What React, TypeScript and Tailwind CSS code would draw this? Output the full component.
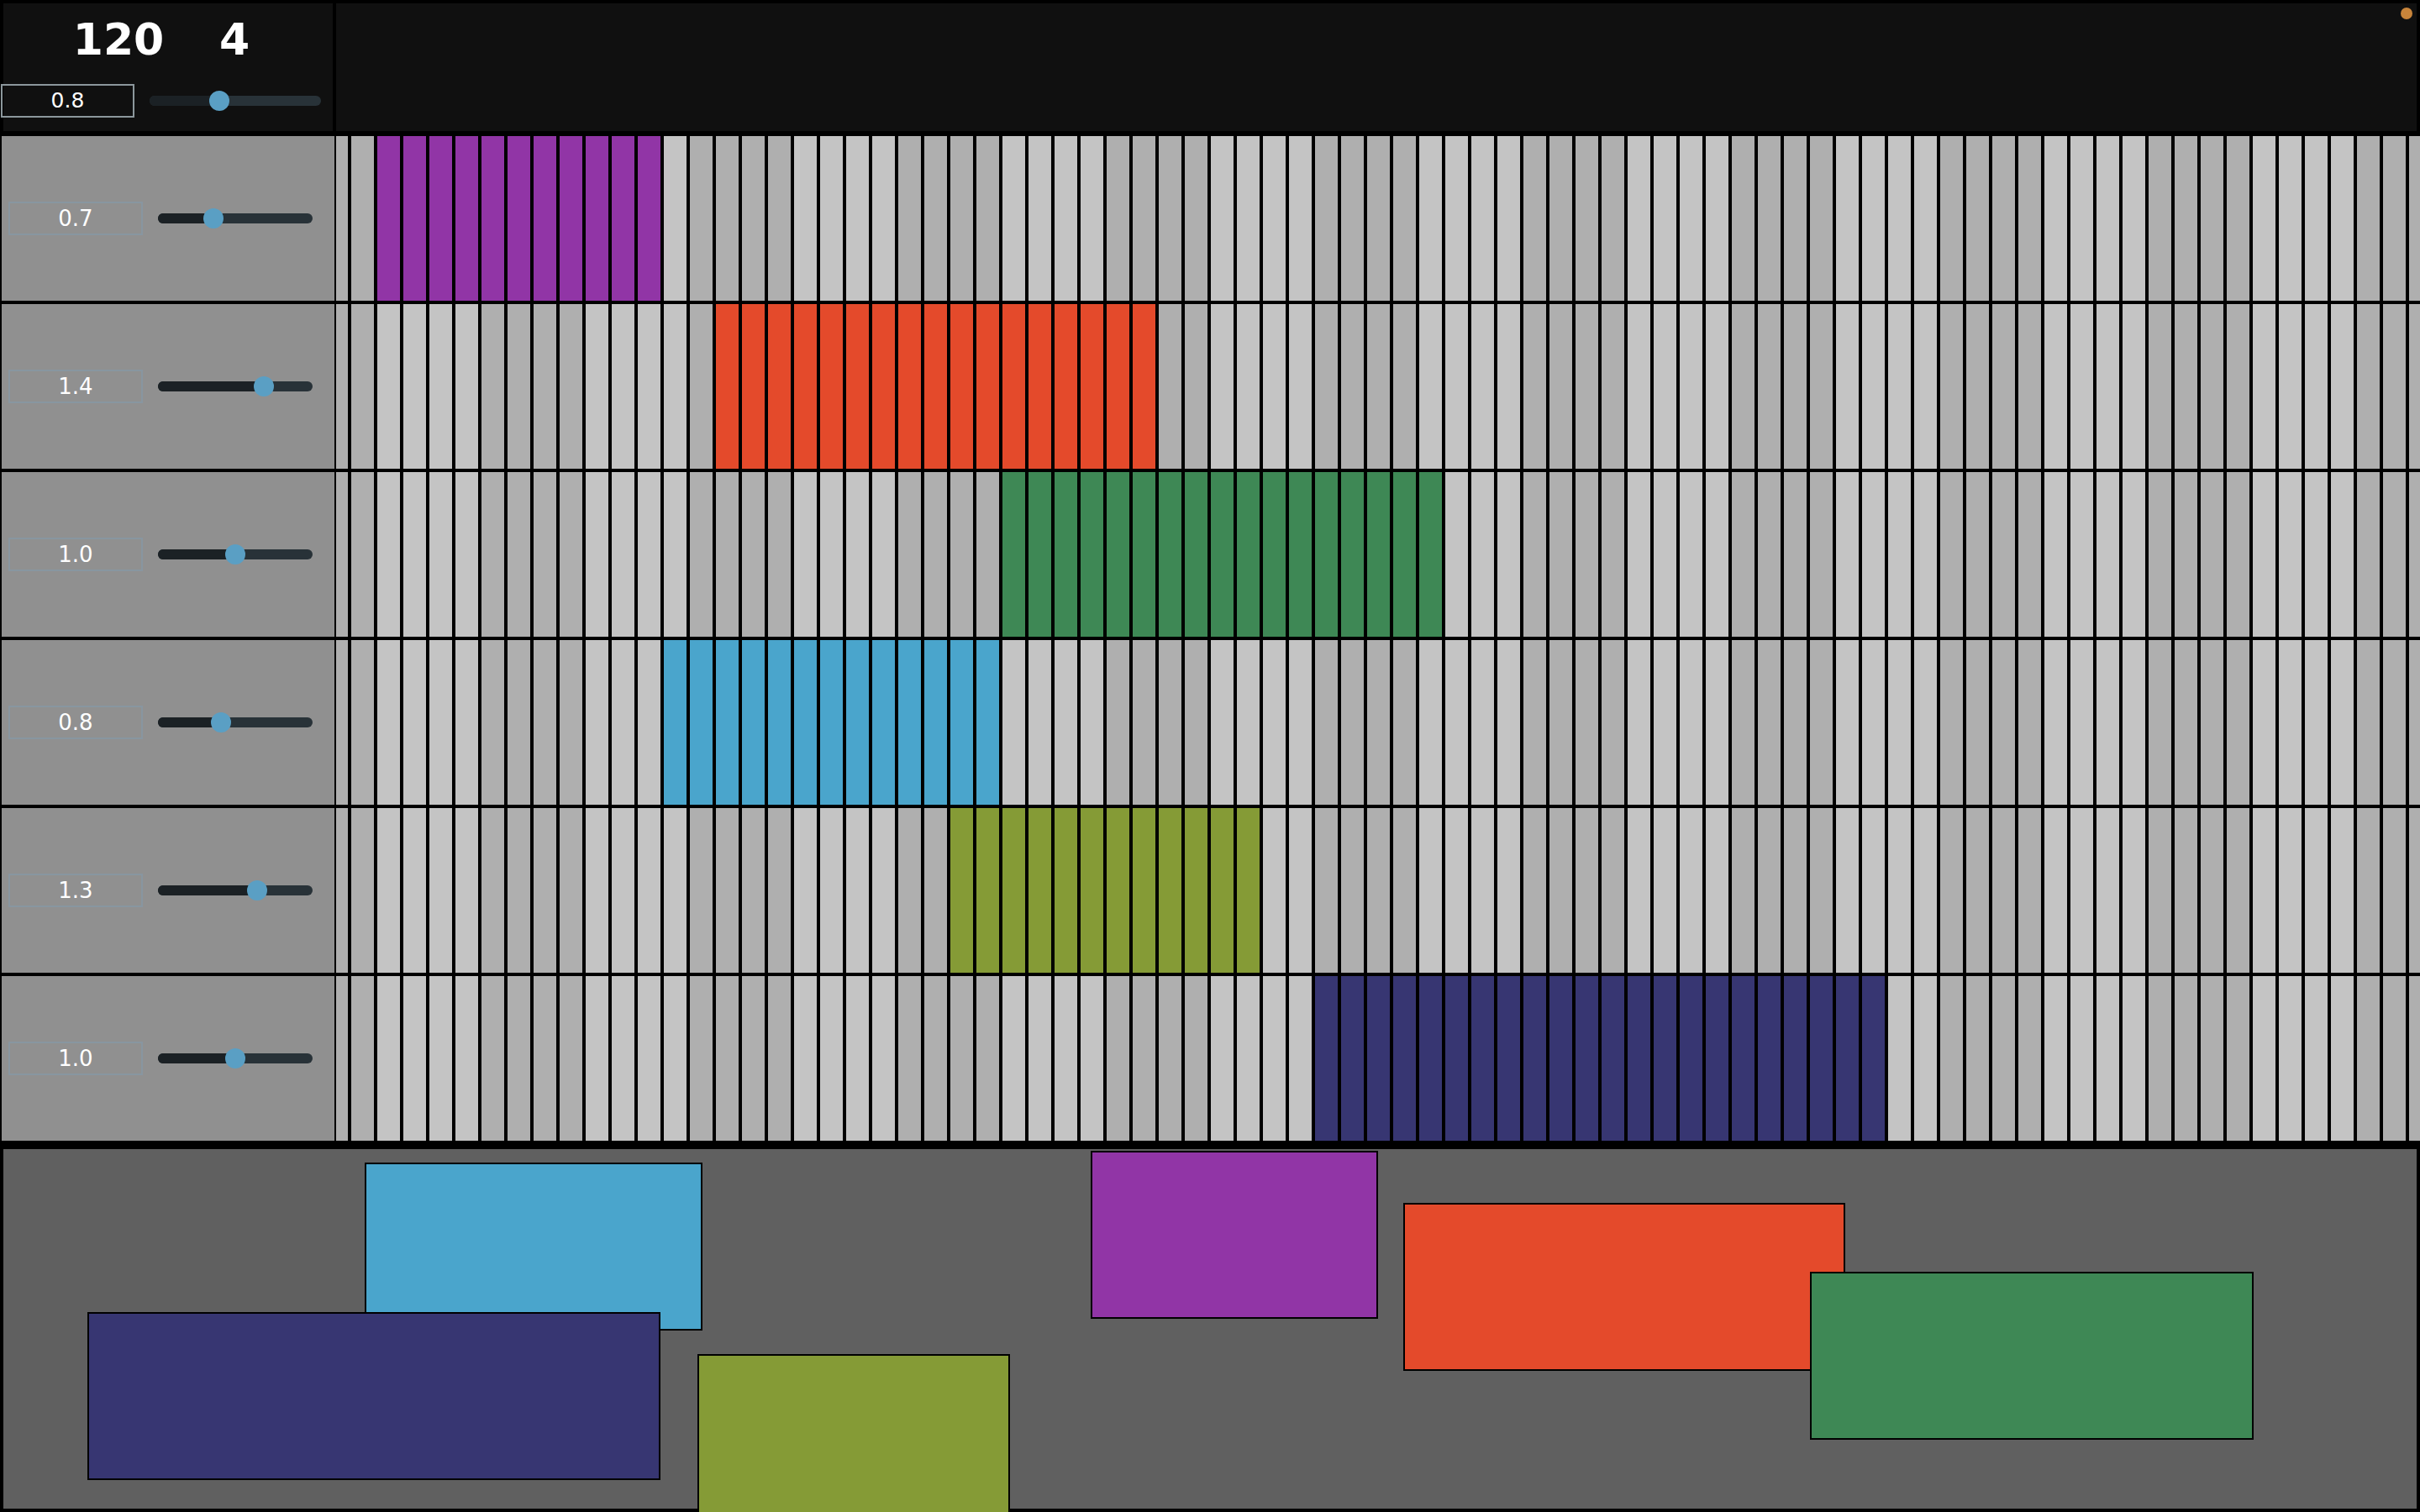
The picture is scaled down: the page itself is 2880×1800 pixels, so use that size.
import React from "react";

type Lane = { value: number; start: number; count: number; fill: string };

// Six lanes: gain value for the lane strip, and the clip that occupies the step grid.
const LANES: Lane[] = [
  { value: 0.7, start: 0, count: 11, fill: "bg-[#9135a6]" },
  { value: 1.4, start: 13, count: 17, fill: "bg-[#e44a2b]" },
  { value: 1.0, start: 24, count: 17, fill: "bg-[#3e8855]" },
  { value: 0.8, start: 11, count: 13, fill: "bg-[#4aa5cc]" },
  { value: 1.3, start: 22, count: 12, fill: "bg-[#859b36]" },
  { value: 1.0, start: 36, count: 22, fill: "bg-[#373672]" },
];

// Clips scattered on the arrangement canvas below the grid (drawn in stacking order).
const CLIPS: string[] = [
  "left-[1294px] top-[2px] w-[342px] bg-[#9135a6]",
  "left-[430px] top-[16px] w-[402px] bg-[#4aa5cc]",
  "left-[1666px] top-[64px] w-[526px] bg-[#e44a2b]",
  "left-[826px] top-[244px] w-[372px] bg-[#859b36]",
  "left-[100px] top-[194px] w-[682px] bg-[#373672]",
  "left-[2150px] top-[146px] w-[528px] bg-[#3e8855]",
];

// Step indices visible in each lane; the first two sit partly under the lane strip.
const STEPS = Array.from({ length: 81 }, (_, i) => i - 2);

function Slider({ value, track }: { value: number; track: string }) {
  const el = React.useRef<HTMLDivElement>(null);
  const [w, setW] = React.useState(0);
  React.useLayoutEffect(() => {
    if (el.current) setW(el.current.offsetWidth);
  }, []);
  const inset = 6;
  const pos = inset + (value / 2) * (w - 2 * inset);
  return (
    <div ref={el} className={`relative h-[12px] shrink-0 rounded-full bg-[#283238] ${track}`}>
      <div className="absolute left-0 top-0 h-full rounded-l-full bg-[#1b2125]" style={{ width: pos }} />
      <div
        className="absolute top-1/2 h-[24px] w-[24px] -translate-x-1/2 -translate-y-1/2 rounded-full bg-[#5a9fc4]"
        style={{ left: pos }}
      />
    </div>
  );
}

function StepRow({ start, count, fill }: { start: number; count: number; fill: string }) {
  return (
    <div className="h-full flex-1 overflow-hidden">
      <div className="-ml-[13px] flex h-full gap-[4px]">
        {STEPS.map((k) => {
          const on = k >= start && k < start + count;
          const dark = ((Math.floor(k / 4) % 2) + 2) % 2 === 1;
          const bg = on ? fill : dark ? "bg-[#afafaf]" : "bg-[#c4c4c4]";
          return <div key={k} className={`h-full w-[27px] shrink-0 ${bg}`} />;
        })}
      </div>
    </div>
  );
}

export default function App() {
  return (
    <div className="relative h-[1800px] w-[2880px] overflow-hidden bg-black font-['DejaVu_Sans','Liberation_Sans',sans-serif] text-white">
      {/* transport header */}
      <div className="flex h-[156px] gap-[4px] px-[4px] pt-[4px]">
        <div className="flex w-[392px] shrink-0 flex-col bg-[#101010]">
          <div className="flex pl-[68px] pt-[17px] text-[52px] font-bold leading-none">
            <span className="w-[138px] text-center">120</span>
            <span className="w-[138px] text-center">4</span>
          </div>
          <div className="mt-[27px] flex h-[40px] items-center">
            <div className="-ml-[3px] flex h-[40px] w-[159px] shrink-0 items-center justify-center border-2 border-[#8c979c] text-[25px]">
              0.8
            </div>
            <div className="ml-[18px]">
              <Slider value={0.8} track="w-[204px]" />
            </div>
          </div>
        </div>
        <div className="relative flex-1 bg-[#101010]">
          <div className="absolute right-[5px] top-[5px] h-[14px] w-[14px] rounded-full bg-[#c8843a]" />
        </div>
      </div>

      {/* lanes */}
      <div className="mt-[6px] flex flex-col gap-[4px]">
        {LANES.map((lane, i) => (
          <div key={i} className="flex h-[196px] gap-[2px]">
            <div className="ml-[2px] flex w-[396px] shrink-0 items-center bg-[#909090]">
              <div className="ml-[8px] flex h-[40px] w-[160px] shrink-0 items-center justify-center border-2 border-[#8896a0] text-[26px]">
                {lane.value.toFixed(1)}
              </div>
              <div className="ml-[18px]">
                <Slider value={lane.value} track="w-[184px]" />
              </div>
            </div>
            <StepRow start={lane.start} count={lane.count} fill={lane.fill} />
          </div>
        ))}
      </div>

      {/* arrangement canvas */}
      <div className="relative mt-[6px] h-[436px] border-4 border-black bg-[#606060]">
        {CLIPS.map((c, i) => (
          <div key={i} className={`absolute h-[200px] border-2 border-black ${c}`} />
        ))}
      </div>
    </div>
  );
}
